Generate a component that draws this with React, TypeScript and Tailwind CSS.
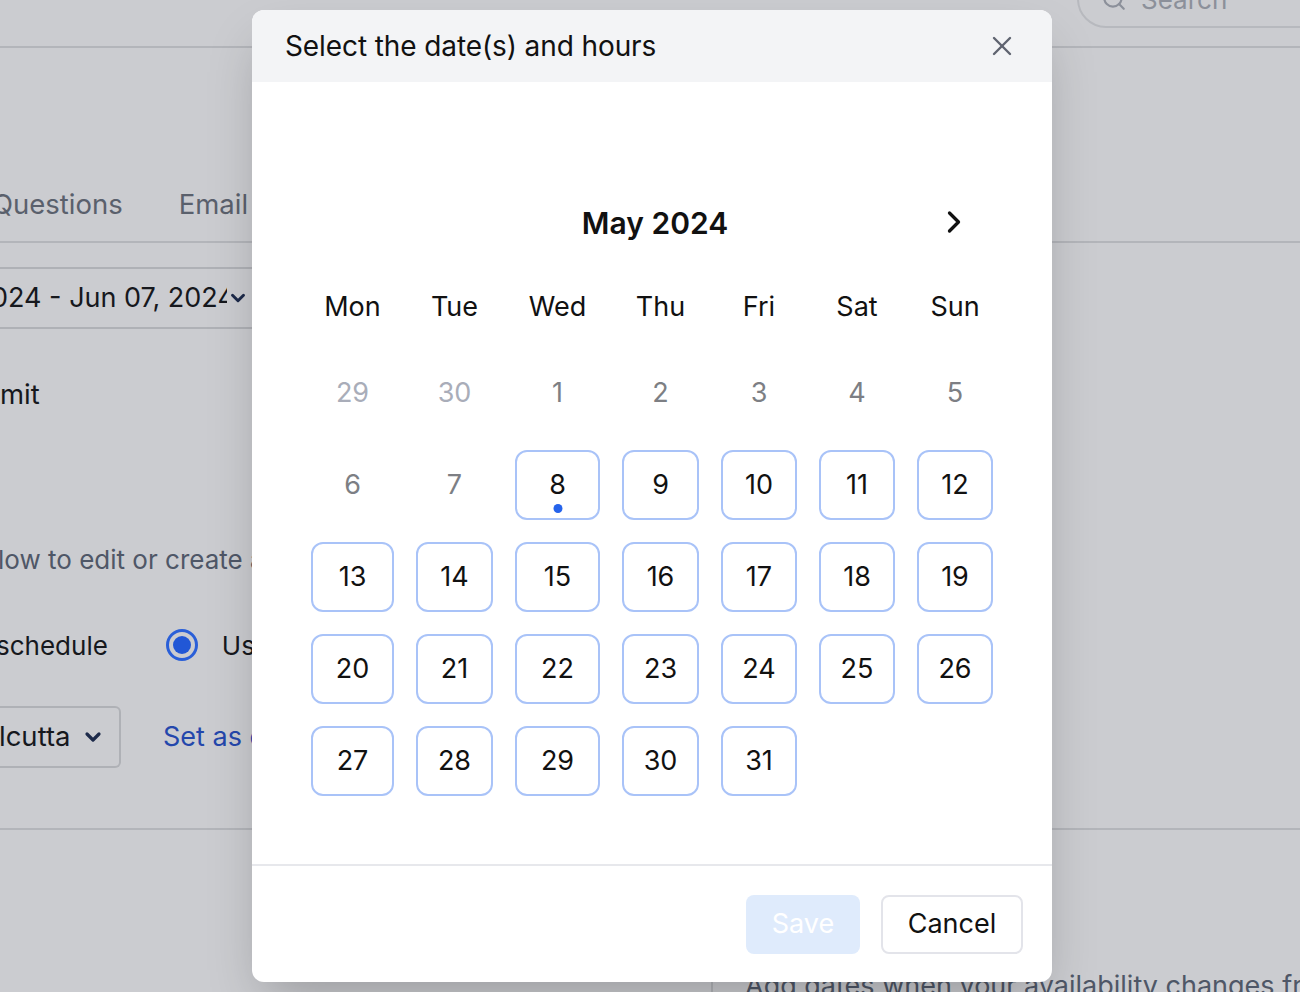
import { ChevronDown, ChevronRight, Search, X } from 'lucide-react';

const font = { fontFamily: 'Inter, "Noto Sans", sans-serif' };

type Cell = { day: number; muted?: 'light' | 'mid'; active?: boolean; dot?: boolean };

const weekdays = ['Mon', 'Tue', 'Wed', 'Thu', 'Fri', 'Sat', 'Sun'];

const weeks: (Cell | null)[][] = [
  [
    { day: 29, muted: 'light' },
    { day: 30, muted: 'light' },
    { day: 1, muted: 'mid' },
    { day: 2, muted: 'mid' },
    { day: 3, muted: 'mid' },
    { day: 4, muted: 'mid' },
    { day: 5, muted: 'mid' },
  ],
  [
    { day: 6, muted: 'mid' },
    { day: 7, muted: 'mid' },
    { day: 8, active: true, dot: true },
    { day: 9, active: true },
    { day: 10, active: true },
    { day: 11, active: true },
    { day: 12, active: true },
  ],
  [13, 14, 15, 16, 17, 18, 19].map((d) => ({ day: d, active: true })),
  [20, 21, 22, 23, 24, 25, 26].map((d) => ({ day: d, active: true })),
  [...[27, 28, 29, 30, 31].map((d) => ({ day: d, active: true })), null, null],
];

function DayCell({ cell }: { cell: Cell | null }) {
  if (!cell) return <div className="h-[70px]" />;
  if (!cell.active) {
    return (
      <div
        className={`h-[70px] flex items-center justify-center text-[27px] ${
          cell.muted === 'light' ? 'text-[#a9adb9]' : 'text-[#7d7f84]'
        }`}
      >
        {cell.day}
      </div>
    );
  }
  return (
    <button className="relative h-[70px] flex items-center justify-center rounded-xl border-2 border-[#a9c3f8] bg-white text-[27px] text-[#111]">
      {cell.day}
      {cell.dot && (
        <span className="absolute bottom-[5px] left-1/2 -translate-x-1/2 w-[9px] h-[9px] rounded-full bg-[#2563eb]" />
      )}
    </button>
  );
}

function DatePickerModal() {
  return (
    <div className="absolute left-[252px] top-[10px] w-[800px] h-[972px] bg-white rounded-xl shadow-2xl flex flex-col overflow-hidden">
      {/* Header */}
      <div className="h-[72px] bg-[#f3f4f6] flex items-center justify-between pl-[33px] pr-[34px]">
        <h2 className="text-[28px] text-[#111] tracking-[-0.1px]">Select the date(s) and hours</h2>
        <X className="w-[32px] h-[32px] text-[#5f6470]" strokeWidth={1.8} />
      </div>

      {/* Calendar */}
      <div className="flex-1 pt-[121px]">
        <div className="relative h-[40px] flex items-center justify-center">
          <span className="text-[30px] font-semibold text-[#111] ml-[6px]">May 2024</span>
          <ChevronRight
            className="absolute right-[80px] top-[1px] w-[36px] h-[36px] text-[#111]"
            strokeWidth={2.2}
          />
        </div>

        <div className="ml-[59px] mt-[35px] grid grid-cols-[83px_77px_85px_77px_76px_76px_76px] gap-x-[22px] gap-y-[22px]">
          {weekdays.map((w) => (
            <div key={w} className="h-[58px] flex items-center justify-center text-[27px] text-[#111]">
              {w}
            </div>
          ))}
          {weeks.flat().map((cell, i) => (
            <DayCell key={i} cell={cell} />
          ))}
        </div>
      </div>

      {/* Footer */}
      <div className="h-[118px] border-t-2 border-[#e7e8ec] flex items-start justify-end gap-[21px] pt-[29px] pr-[29px]">
        <button className="w-[114px] h-[59px] rounded-lg bg-[#dfebfc] text-white text-[27px]">Save</button>
        <button className="w-[142px] h-[59px] rounded-lg border-2 border-[#e3e4ea] bg-white text-[#111] text-[27px]">
          Cancel
        </button>
      </div>
    </div>
  );
}

export default function App() {
  return (
    <div className="relative w-[1300px] h-[992px] overflow-hidden bg-[#cbccd0] text-[#16181d]" style={font}>
      {/* Dimmed page behind the dialog */}
      <div className="h-[48px] border-b-2 border-[#b3b5ba] flex justify-end">
        <div className="-mt-[30px] ml-auto w-[300px] h-[58px] mr-[-77px] rounded-full border-2 border-[#b7b9be] flex items-center gap-[14px] pl-[22px] text-[#8c909a] text-[26px]">
          <Search className="w-[26px] h-[26px]" strokeWidth={2} />
          <span>Search</span>
        </div>
      </div>

      <div className="h-[195px] border-b-2 border-[#b3b5ba] flex items-end gap-[56px] pb-[16px] -ml-[8px] text-[27.5px] text-[#5a606c]">
        <span>Questions</span>
        <span>Email</span>
      </div>

      <div className="mt-[24px] w-[270px] h-[62px] -ml-[9px] border-y-2 border-r-2 border-[#afb1b6] flex items-center text-[27px]">
        <span className="w-[236px] overflow-hidden whitespace-nowrap">024 - Jun 07, 2024</span>
        <ChevronDown className="w-[22px] h-[22px] text-[#1d2a4a]" strokeWidth={3.2} />
      </div>

      <div className="mt-[48px] h-[36px] flex items-center text-[27.5px]">mit</div>

      <div className="mt-[128px] h-[36px] flex items-center text-[26px] text-[#4f5767] -ml-[2px] whitespace-nowrap">
        low to edit or create a
      </div>

      <div className="mt-[50px] h-[36px] flex items-center text-[26px] -ml-[4px]">
        <span>schedule</span>
        <span className="ml-[58px] w-[32px] h-[32px] rounded-full border-[3px] border-[#2a5fd8] flex items-center justify-center">
          <span className="w-[18px] h-[18px] rounded-full bg-[#2157d6]" />
        </span>
        <span className="ml-[24px]">Use</span>
      </div>

      <div className="mt-[43px] flex items-center">
        <div className="w-[122px] h-[62px] -ml-[1px] border-2 border-l-0 border-[#afb1b6] rounded-r-md flex items-center gap-[10px] text-[27.5px]">
          <span>lcutta</span>
          <ChevronDown className="w-[24px] h-[24px] text-[#1d2a4a]" strokeWidth={3.2} />
        </div>
        <span className="ml-[42px] text-[27px] text-[#2447ac] whitespace-nowrap">Set as default</span>
      </div>

      <div className="mt-[60px] border-b-2 border-[#b3b5ba]" />

      <div className="mt-[136px] ml-[711px] border-l-2 border-[#b3b5ba] pl-[32px] h-[40px] flex items-start text-[27px] text-[#4f5767] whitespace-nowrap">
        Add dates when your availability changes from
      </div>

      <DatePickerModal />
    </div>
  );
}
